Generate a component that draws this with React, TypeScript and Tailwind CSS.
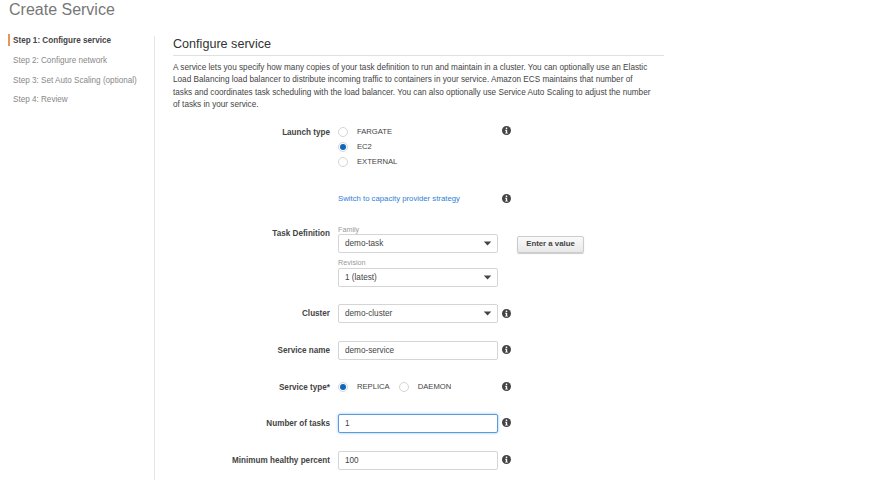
import { ReactNode } from 'react'

const InfoIcon = () => (
  <svg viewBox="0 0 16 16" className="w-[9px] h-[9px] block">
    <circle cx="8" cy="8" r="8" fill="#444" />
    <rect x="6.6" y="2.6" width="2.8" height="2.8" rx="1" fill="#fff" />
    <path d="M5.6 6.8h3.6v5h1.2v1.6H5.6v-1.6h1.2V8.4H5.6z" fill="#fff" />
  </svg>
)

const Caret = () => (
  <svg viewBox="0 0 10 6" className="w-[9px] h-[5px] block">
    <path d="M0.5 0.5h9L5 5.5z" fill="#444" />
  </svg>
)

const Radio = ({ checked = false }: { checked?: boolean }) => (
  <span className="w-[10px] h-[10px] rounded-full border border-[#d5d5d5] bg-white flex items-center justify-center shrink-0">
    {checked && <span className="w-[6px] h-[6px] rounded-full bg-[#1166bb]" />}
  </span>
)

const Label = ({ children }: { children: ReactNode }) => (
  <div className="w-[175px] shrink-0 pt-[2px] text-right font-bold text-[#444] text-[8.15px]">{children}</div>
)

const Select = ({ value }: { value: string }) => (
  <div className="w-[160px] h-[19px] border border-[#d5d5d5] rounded-[2px] bg-white flex items-center justify-between pl-[6px] pr-[5px] text-[8.2px] text-[#444]">
    <span className="pt-[3px]">{value}</span>
    <Caret />
  </div>
)

const Input = ({ value, focused = false }: { value: string; focused?: boolean }) => (
  <div
    className={
      focused
        ? 'w-[160px] h-[19px] border border-[#5b9bd8] shadow-[0_0_3px_#8fc0ee] rounded-[2px] bg-white flex items-center pl-[6px] text-[8.2px] text-[#444]'
        : 'w-[160px] h-[19px] border border-[#d5d5d5] rounded-[2px] bg-white flex items-center pl-[6px] text-[8.2px] text-[#444]'
    }
  >
    <span className="pt-[2px]">{value}</span>
  </div>
)

const steps = ['Step 2: Configure network', 'Step 3: Set Auto Scaling (optional)', 'Step 4: Review']

export default function App() {
  return (
    <div className="w-[880px] h-[480px] overflow-hidden bg-white font-['Liberation_Sans',Arial,sans-serif]">
      <h1 className="pl-[9px] h-[36px] text-[16px] leading-[19px] text-[#777]">Create Service</h1>
      <div className="flex h-[444px]">
        {/* Steps */}
        <div className="w-[155px] shrink-0 border-r border-[#e5e5e5] pl-[8px] text-[8.15px]">
          <div className="border-l-2 border-[#e8935a] pl-[3px] h-[12px] mt-[-2px] pt-[1px] leading-[12px] font-bold text-[#444]">
            Step 1: Configure service
          </div>
          <div className="pl-[5px] mt-[9px] flex flex-col gap-[8.6px] text-[#888] leading-[11px]">
            {steps.map((s) => (
              <div key={s}>{s}</div>
            ))}
          </div>
        </div>

        <div className="flex-1 min-w-0">
          <div className="ml-[18px] w-[491px]">
            <h2 className="text-[12.6px] leading-[15px] text-[#333] pt-[1px] pb-[3px] border-b border-[#e0e0e0]">
              Configure service
            </h2>
            <p className="mt-[6px] text-[8.2px] leading-[12.4px] text-[#444] whitespace-nowrap">
              A service lets you specify how many copies of your task definition to run and maintain in a cluster. You can optionally use an Elastic
              <br />
              Load Balancing load balancer to distribute incoming traffic to containers in your service. Amazon ECS maintains that number of
              <br />
              tasks and coordinates task scheduling with the load balancer. You can also optionally use Service Auto Scaling to adjust the number
              <br />
              of tasks in your service.
            </p>
          </div>

          <div className="mt-[13px]">
            <div className="flex">
              <Label>Launch type</Label>
              <div className="ml-[8px] pt-[2px] w-[160px] flex flex-col gap-[5px] text-[7.65px] text-[#444]">
                <div className="flex items-center gap-[9px] h-[10px]"><Radio /> FARGATE</div>
                <div className="flex items-center gap-[9px] h-[10px]"><Radio checked /> EC2</div>
                <div className="flex items-center gap-[9px] h-[10px]"><Radio /> EXTERNAL</div>
              </div>
              <div className="ml-[4px] mt-[1px]"><InfoIcon /></div>
            </div>

            <div className="flex mt-[27px] items-center h-[10px]">
              <div className="w-[183px]" />
              <a className="w-[160px] text-[7.75px] text-[#2f7fd6]">Switch to capacity provider strategy</a>
              <div className="ml-[4px]"><InfoIcon /></div>
            </div>

            <div className="flex mt-[22px]">
              <Label>Task Definition</Label>
              <div className="ml-[8px] w-[160px] flex flex-col">
                <div className="text-[7.2px] leading-[8px] text-[#999] h-[8px]">Family</div>
                <Select value="demo-task" />
                <div className="text-[7.2px] leading-[8px] text-[#999] h-[9px] mt-[6px]">Revision</div>
                <Select value="1 (latest)" />
              </div>
              <div className="ml-[19px] mt-[10px] w-[67px] h-[17px] rounded-[2px] border border-[#ccc] bg-gradient-to-b from-[#fafafa] to-[#e8e8e8] shadow-[0_1px_1px_#ccc] flex items-center justify-center text-[7.8px] font-bold text-[#444]">
                Enter a value
              </div>
            </div>

            <div className="flex items-center mt-[17px]">
              <Label>Cluster</Label>
              <div className="ml-[8px]"><Select value="demo-cluster" /></div>
              <div className="ml-[4px]"><InfoIcon /></div>
            </div>

            <div className="flex items-center mt-[18px]">
              <Label>Service name</Label>
              <div className="ml-[8px]"><Input value="demo-service" /></div>
              <div className="ml-[4px] mb-[2px]"><InfoIcon /></div>
            </div>

            <div className="flex items-center mt-[21px] h-[12px]">
              <Label>Service type*</Label>
              <div className="ml-[8px] w-[160px] flex items-center text-[7.65px] text-[#444]">
                <Radio checked />
                <span className="ml-[9px]">REPLICA</span>
                <span className="ml-[9px]"><Radio /></span>
                <span className="ml-[9px]">DAEMON</span>
              </div>
              <div className="ml-[4px]"><InfoIcon /></div>
            </div>

            <div className="flex items-center mt-[21px]">
              <Label>Number of tasks</Label>
              <div className="ml-[8px]"><Input value="1" focused /></div>
              <div className="ml-[4px] mb-[2px]"><InfoIcon /></div>
            </div>

            <div className="flex items-center mt-[18px]">
              <Label>Minimum healthy percent</Label>
              <div className="ml-[8px]"><Input value="100" /></div>
              <div className="ml-[4px] mb-[2px]"><InfoIcon /></div>
            </div>
          </div>
        </div>
      </div>
    </div>
  )
}
